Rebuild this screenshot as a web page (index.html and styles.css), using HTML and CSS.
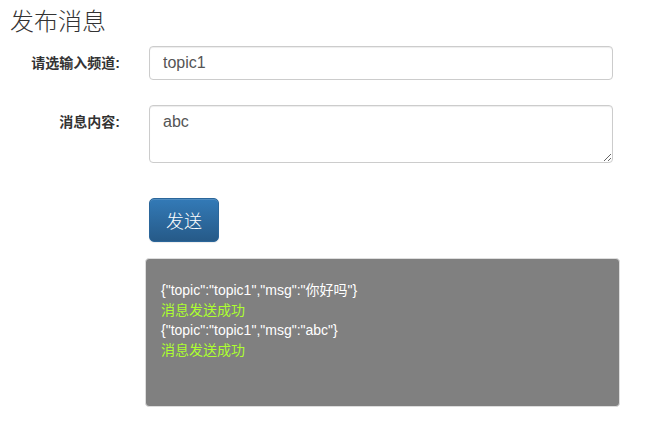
FILE: index.html
```html
<!DOCTYPE html>
<html lang="zh-CN">
<head>
  <meta charset="UTF-8">
  <title>发布消息</title>
  <link rel="stylesheet" href="styles.css">
</head>
<body>
  <h3 class="title">发布消息</h3>

  <div class="form">
    <div class="form-row">
      <label class="form-label" for="topic">请选输入频道:</label>
      <input class="form-control" id="topic" type="text" value="topic1">
    </div>
    <div class="form-row">
      <label class="form-label" for="msg">消息内容:</label>
      <textarea class="form-control area" id="msg">abc</textarea>
    </div>
    <div class="form-row actions">
      <span class="form-label"></span>
      <button class="btn">发送</button>
    </div>
  </div>

  <div class="log">
    <div class="log-line">{"topic":"topic1","msg":"你好吗"}</div>
    <div class="log-line ok">消息发送成功</div>
    <div class="log-line">{"topic":"topic1","msg":"abc"}</div>
    <div class="log-line ok">消息发送成功</div>
  </div>
</body>
</html>
```

FILE: styles.css
```css
body {
  font-family: "Liberation Sans", Arial, "Noto Sans CJK SC", sans-serif;
  font-size: 14px;
  color: #333;
  background: #fff;
  margin: 0;
  padding: 0 0 0 10px;
}
.title {
  font-size: 24px;
  font-weight: 300;
  line-height: 26px;
  margin: 9px 0 11px;
  color: #333;
}
.form {
  display: flex;
  flex-direction: column;
}
.form-row {
  display: flex;
  align-items: flex-start;
  margin-bottom: 25px;
}
.form-label {
  width: 110px;
  flex: none;
  text-align: right;
  font-weight: bold;
  padding-top: 6px;
  margin-right: 29px;
}
.form-control {
  box-sizing: border-box;
  width: 464px;
  height: 34px;
  margin: 0;
  padding: 6px 13px;
  font-family: inherit;
  font-size: 16px;
  color: #555;
  border: 1px solid #ccc;
  border-radius: 4px;
  box-shadow: inset 0 1px 1px rgba(0, 0, 0, .075);
}
.area {
  height: 58px;
  padding-top: 7px;
  resize: vertical;
}
.actions {
  margin-top: 10px;
  margin-bottom: 16px;
}
.btn {
  box-sizing: border-box;
  height: 44px;
  width: 70px;
  padding: 0;
  font-family: inherit;
  font-size: 18px;
  font-weight: 300;
  color: #fff;
  border: 1px solid #2b669a;
  border-radius: 5px;
  background: linear-gradient(to bottom, #337ab7 0%, #265a88 100%);
  box-shadow: inset 0 1px 0 rgba(255, 255, 255, .15), 0 1px 1px rgba(0, 0, 0, .075);
}
.log {
  box-sizing: border-box;
  margin-left: 135px;
  width: 475px;
  height: 149px;
  background: #808080;
  border: 1px solid #ddd;
  border-radius: 4px;
  padding: 21px 15px;
  color: #fff;
}
.log-line {
  line-height: 20px;
}
.ok {
  color: #adff2f;
}
```
